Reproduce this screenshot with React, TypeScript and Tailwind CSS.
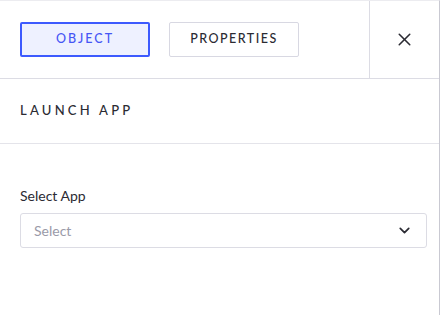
import { X, ChevronDown } from "lucide-react";

export default function App() {
  return (
    <div className="h-[315px] w-[440px] overflow-hidden border-t border-r border-t-[#ececf0] border-r-[#c9c9d2] bg-white font-['Lato',sans-serif] text-[#2b2b33]">
      {/* Tabs header */}
      <div className="flex h-[78px] border-b border-[#dcdce4]">
        <div className="flex flex-1 items-center gap-[19px] px-5">
          <button className="flex h-[35px] w-[130px] items-center justify-center rounded-[2px] border-2 border-[#3d5afe] bg-[#eef1ff] text-[12.5px] font-medium tracking-[0.16em] text-[#4656f5]">
            OBJECT
          </button>
          <button className="flex h-[35px] w-[130px] items-center justify-center rounded-[2px] border border-[#d8d8e2] bg-white text-[12.5px] font-medium tracking-[0.12em] text-[#2b2b33]">
            PROPERTIES
          </button>
        </div>
        <div className="flex w-[70px] items-center justify-center border-l border-[#dcdce4]">
          <X className="h-[21px] w-[21px] text-[#2b2b33]" strokeWidth={1.8} />
        </div>
      </div>

      {/* Section title */}
      <div className="flex h-[65px] items-center border-b border-[#e4e4ea] px-5">
        <h2 className="text-[13px] font-medium tracking-[0.25em] text-[#2b2b33]">LAUNCH APP</h2>
      </div>

      {/* Form */}
      <div className="px-5 pt-[43px]">
        <label className="block text-[14px] leading-[18px] text-[#2b2b33]">Select App</label>
        <div className="mt-[8px] flex h-[35px] w-[407px] items-center justify-between rounded-[3px] border border-[#dcdce4] pl-[13px] pr-[13px]">
          <span className="text-[14px] text-[#9a9aa8]">Select</span>
          <ChevronDown className="h-[17px] w-[17px] text-[#2b2b33]" strokeWidth={2.4} />
        </div>
      </div>
    </div>
  );
}
